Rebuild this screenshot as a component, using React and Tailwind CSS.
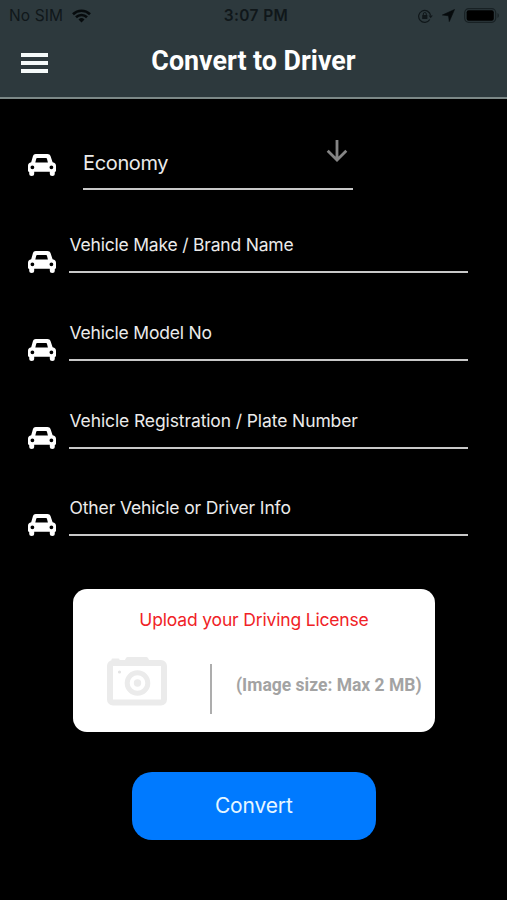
import clsx from 'clsx'

const FIELDS = [
  { id: 'make', label: 'Vehicle Make / Brand Name', spacing: 'tracking-[-0.2px]' },
  { id: 'model', label: 'Vehicle Model No', spacing: 'tracking-[-0.19px]' },
  { id: 'plate', label: 'Vehicle Registration / Plate Number', spacing: 'tracking-[-0.11px]' },
  { id: 'info', label: 'Other Vehicle or Driver Info', spacing: 'tracking-[-0.13px]' },
]

function CarIcon({ className }) {
  return (
    <svg width="29" height="22" viewBox="0 0 29 22" className={clsx('shrink-0', className)}>
      <path
        fill="#fff"
        fillRule="evenodd"
        d="M8.800 0h11.600c1.600 0 2.700.8 3.200 2.300l2 5.900c2.300.3 3.400 1.600 3.400 3.600v4.700c0 .8-.4 1.300-1.200 1.400v1.500a2.500 2.500 0 0 1-5 0v-1.600H7.200v1.600a2.500 2.500 0 0 1-5 0v-1.500C1.400 17.800 1 17.300 1 16.500v-4.700c0-2 1-3.300 3.200-3.600l1.700-5.900C6.400.8 7.300 0 8.800 0zM10.200 4c-.5 0-.8.2-.9.6L8.300 8.500h12.600l-1-3.900c-.1-.4-.4-.6-.9-.6zM5.400 11.400a1.900 1.900 0 1 0 0 3.800 1.900 1.900 0 0 0 0-3.800zM24.400 11.400a1.900 1.900 0 1 0 0 3.800 1.900 1.900 0 0 0 0-3.800z"
      />
    </svg>
  )
}

function CameraIcon() {
  return (
    <svg width="60" height="49" viewBox="0 0 60 49" className="mt-[4px] shrink-0">
      <path d="M4.500 4.500V2.500q0-1 1-1h6q1 0 1 1v2zM17 4.500l2-3.500q.5-1 2-1h18q1.500 0 2 1l2 3.500z" fill="#ebebeb" />
      <rect x="3" y="6" width="54" height="39.500" rx="3" fill="none" stroke="#ebebeb" strokeWidth="6" />
      <circle cx="30.500" cy="26" r="10.300" fill="none" stroke="#ebebeb" strokeWidth="5" />
      <circle cx="30.500" cy="26" r="3.700" fill="#ebebeb" />
      <circle cx="12.500" cy="15" r="1.600" fill="#e3e3e3" />
    </svg>
  )
}

function StatusBar() {
  return (
    <div className="h-[30px] pt-px pl-[9px] pr-[7px] grid grid-cols-3 items-center text-[15.500px] text-[#10171a]">
      <div className="flex items-center gap-[9px]">
        <span className="whitespace-nowrap tracking-[0.1px]">No SIM</span>
        <svg width="19" height="14" viewBox="0 0 19 14" fill="none" stroke="#070b0d" strokeWidth="2.600">
          <path d="M1 5.200a12.200 12.200 0 0 1 17 0M4 8.300a7.900 7.900 0 0 1 11 0" />
          <path d="M9.500 13.500l-3-3a4.300 4.300 0 0 1 6 0z" fill="#070b0d" stroke="none" />
        </svg>
      </div>
      <span className="pl-[3px] text-center font-semibold whitespace-nowrap tracking-[0.35px]">3:07 PM</span>
      <div className="flex items-center justify-end">
        <svg width="15" height="14" viewBox="0 0 15 14" fill="none" stroke="#10171a">
          <path d="M11.800 10.500A6 6 0 1 1 12.600 6.500" strokeWidth="1.200" />
          <path d="M10.600 6.500h4.200l-2.100 2.800z" fill="#10171a" stroke="none" />
          <rect x="4.200" y="6" width="5.200" height="4" rx=".6" fill="#10171a" stroke="none" />
          <path d="M5.300 6.300V5a1.500 1.500 0 0 1 3 0v1.300" />
        </svg>
        <svg width="13" height="13" viewBox="0 0 13 13" className="ml-[9px]">
          <path d="M12.500.500L7.300 12.600 6.500 6.800.400 6z" fill="#070b0d" stroke="#070b0d" strokeWidth=".6" />
        </svg>
        <svg width="36" height="15" viewBox="0 0 36 15" className="ml-[9px]">
          <rect x=".7" y=".7" width="31" height="13.600" rx="4" fill="none" stroke="#182124" strokeWidth="1.200" />
          <rect x="2.600" y="2.300" width="27.200" height="10.400" rx="2" fill="#000" />
          <path d="M33.500 5c1.800.8 1.800 4.200 0 5z" fill="#182124" />
        </svg>
      </div>
    </div>
  )
}

export default function App() {
  return (
    <div className="w-[507px] h-[900px] bg-black text-[#ebebeb] overflow-hidden font-['Inter',sans-serif]">
      <header className="h-[99px] bg-[#2d393d] border-b-2 border-[#7c8887]">
        <StatusBar />
        <div className="h-[66px] px-[21px] grid grid-cols-[28px_1fr_28px] items-center">
          <button aria-label="Menu" className="flex flex-col gap-[4px] w-[27px]">
            <span className="h-[4px] bg-[#f5fafa]" />
            <span className="h-[4px] bg-[#f5fafa]" />
            <span className="h-[4px] bg-[#f5fafa]" />
          </button>
          <h1 className="pb-[3px] text-center text-[26.800px] leading-none font-bold text-white font-['Roboto',sans-serif]">
            Convert to Driver
          </h1>
        </div>
      </header>

      <main>
        <div className="flex pl-[27px] pt-[33px]">
          <CarIcon className="mt-[22px]" />
          <button className="ml-[27px] w-[270px] h-[58px] border-b-2 border-[#c8c8c8] flex justify-between text-left">
            <span className="text-[20px] leading-none mt-[21px] tracking-[-0.35px]">Economy</span>
            <svg width="22" height="24" viewBox="0 0 22 24" className="mt-[7px] mr-[5px]" fill="none" stroke="#858585" strokeWidth="2.800">
              <path d="M11 1v20M1.700 11.800L11 21l9.300-9.200" />
            </svg>
          </button>
        </div>

        <div className="pt-[39px]">
          {FIELDS.map(field => (
            <div key={field.id} className="flex h-[87.800px] pl-[27px]">
              <CarIcon className="mt-[22px]" />
              <div className="ml-[13px] w-[399px] h-[44px] border-b-2 border-[#c8c8c8]">
                <p className={clsx('mt-[6px] ml-[0.500px] text-[17.500px] leading-[20px] whitespace-nowrap', field.spacing)}>
                  {field.label}
                </p>
              </div>
            </div>
          ))}
        </div>

        <section className="mt-[8.600px] ml-[73px] w-[362px] h-[143px] rounded-[14px] bg-white">
          <h2 className="pt-[21px] text-center text-[17.500px] leading-[20px] tracking-[-0.17px] text-[#f02226]">
            Upload your Driving License
          </h2>
          <div className="mt-[23px] pl-[34px] flex">
            <CameraIcon />
            <div className="ml-[43px] mt-[11px] w-[2px] h-[50px] bg-[#adadad]" />
            <p className="ml-[24px] mt-[22px] text-[17.500px] leading-[20px] font-bold text-[#a3a3a3] whitespace-nowrap font-['Roboto',sans-serif]">
              (Image size: Max 2 MB)
            </p>
          </div>
        </section>

        <button className="mt-[40px] ml-[132px] w-[243.500px] h-[68px] rounded-[20px] bg-[#007aff] text-[21px] tracking-[-0.15px] text-[#e6f6ff]">
          Convert
        </button>
      </main>
    </div>
  )
}
